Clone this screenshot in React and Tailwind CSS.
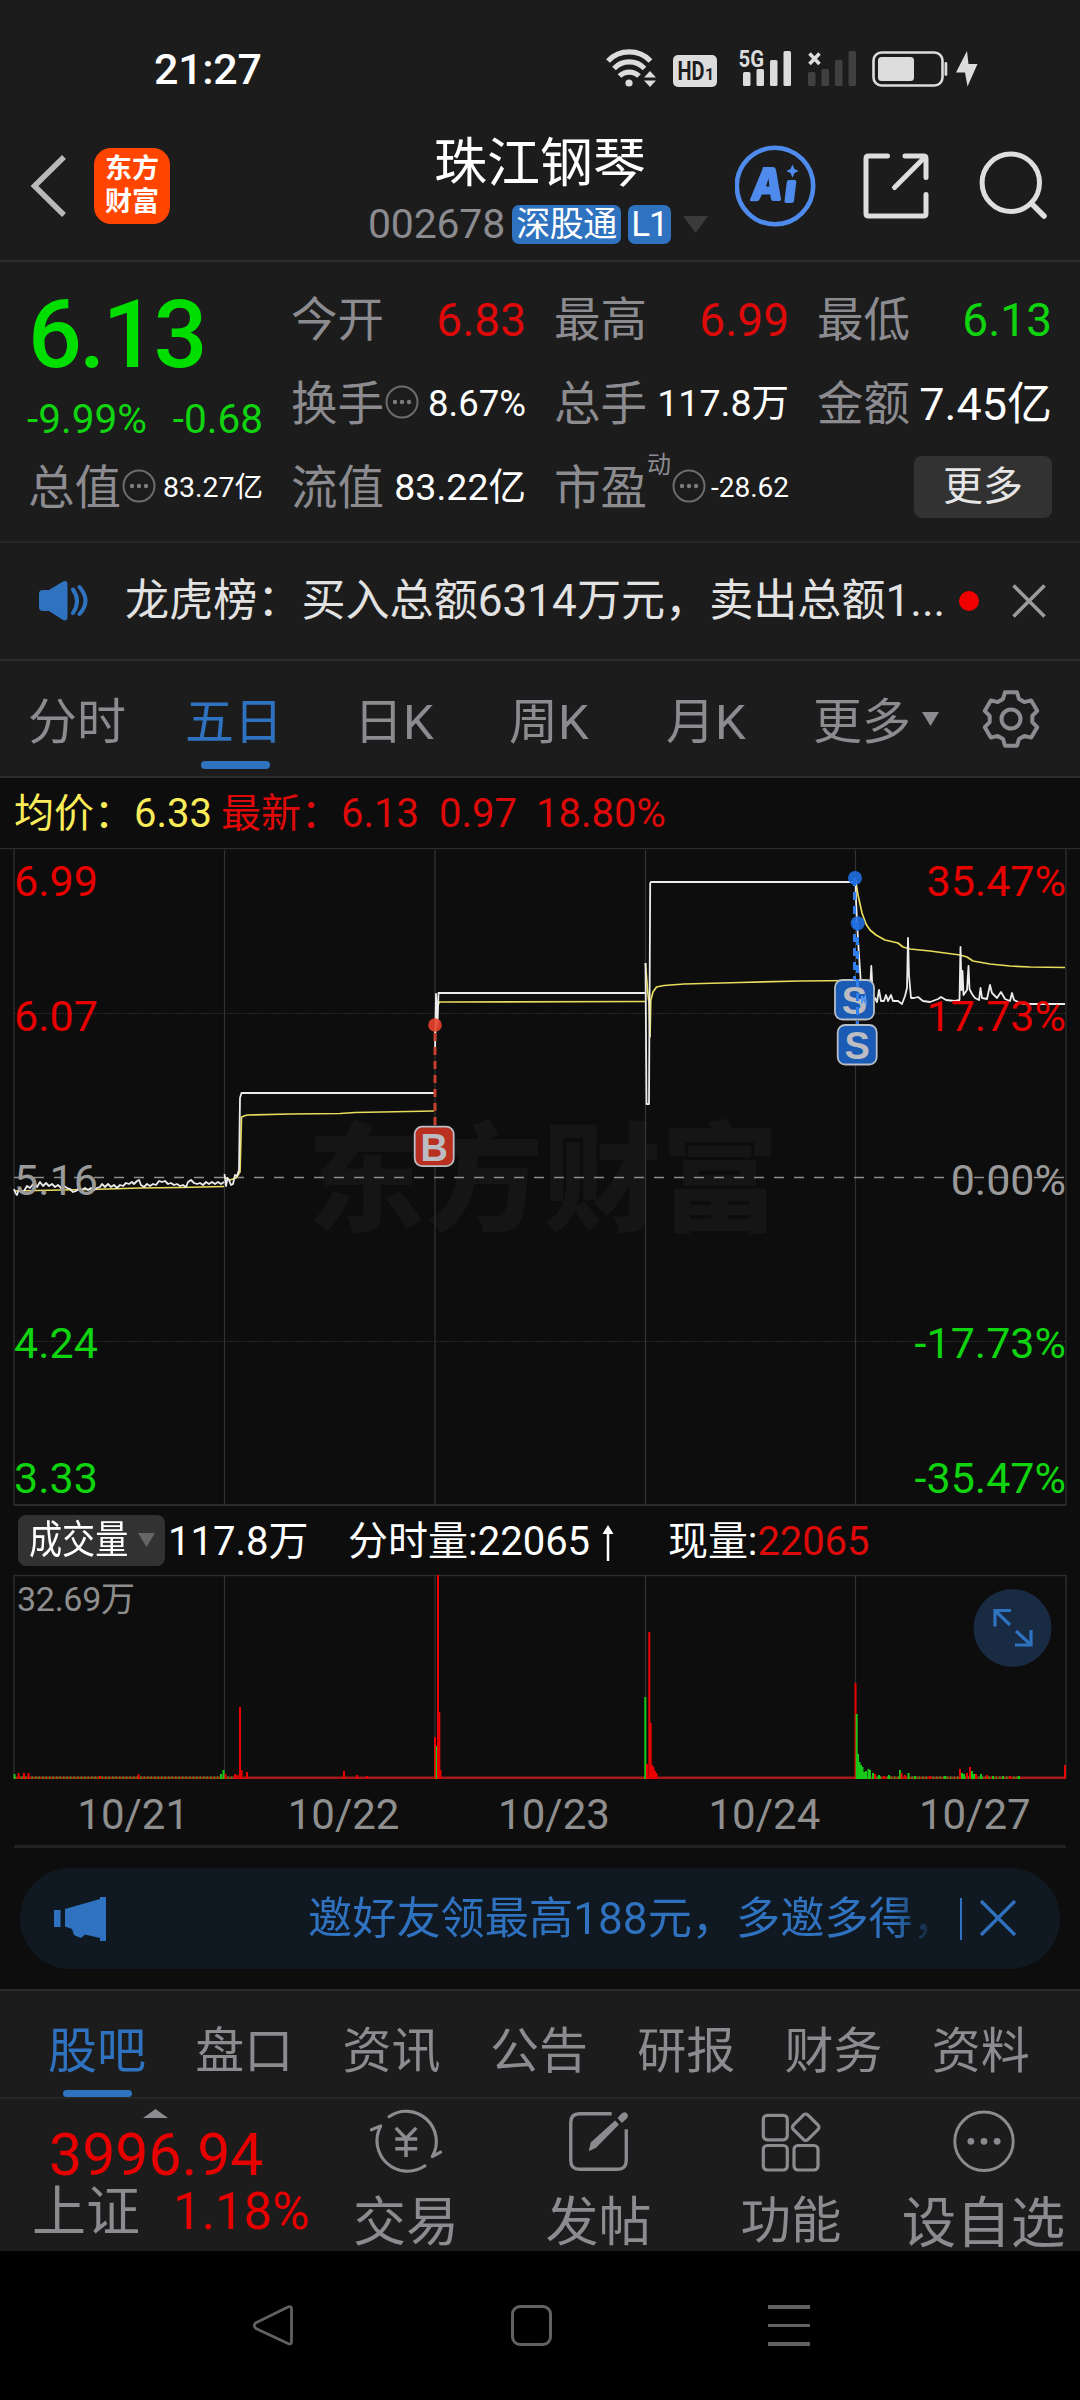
import React from "react";

const UP = "#e60000";
const DOWN = "#0fd40f";

/* ---------- status bar ---------- */

function StatusBar() {
  return (
    <div className="flex h-[130px] items-start justify-between pl-[154px] pr-[96px] pt-[42px]">
      <span className="text-[43px] font-medium leading-[54px] tracking-[-0.3px] text-white">21:27</span>
      <svg width="384" height="50" viewBox="600 42 384 50" className="mt-0 text-[#dcdcdc]">
        <g fill="none" stroke="#dcdcdc" strokeWidth="5.2">
          <path d="M608 61a29.5 29.5 0 0 1 42.5 0" />
          <path d="M614 68.5a21 21 0 0 1 30.5 0" />
          <path d="M619.500 76a14 14 0 0 1 19.500 0" />
        </g>
        <circle cx="629" cy="83" r="3.6" fill="#dcdcdc" />
        <path d="M650 71l6 6.500h-12zM650 87l6-6.500h-12z" fill="#dcdcdc" />
        <rect x="673" y="55" width="44" height="32" rx="5" fill="#dcdcdc" />
        <text x="677.5" y="80" fontSize="25" fontWeight="700" fill="#1c1c1c" fontFamily="Roboto" textLength="27" lengthAdjust="spacingAndGlyphs">HD</text>
        <text x="705" y="80" fontSize="16" fontWeight="700" fill="#1c1c1c" fontFamily="Roboto">1</text>
        <text x="738.500" y="66.500" fontSize="23" fontWeight="700" fill="#dcdcdc" fontFamily="Roboto" textLength="25.500" lengthAdjust="spacingAndGlyphs">5G</text>
        <g fill="#dcdcdc">
          <rect x="743" y="72" width="7.500" height="14" rx="1.500" />
          <rect x="756.500" y="69" width="7.500" height="17" rx="1.500" />
          <rect x="770" y="60" width="7.500" height="26" rx="1.500" />
          <rect x="783.500" y="51" width="7.500" height="35" rx="1.500" />
        </g>
        <g fill="#404040">
          <rect x="808" y="72" width="7.500" height="14" rx="1.500" />
          <rect x="821.500" y="69" width="7.500" height="17" rx="1.500" />
          <rect x="835" y="60" width="7.500" height="26" rx="1.500" />
          <rect x="848.500" y="51" width="7.500" height="35" rx="1.500" />
        </g>
        <path d="M809.500 53.500l10 10.500m0-10.500l-10 10.500" stroke="#dcdcdc" strokeWidth="3.6" />
        <rect x="873.500" y="52.500" width="69" height="33" rx="8" fill="none" stroke="#dcdcdc" strokeWidth="2.600" />
        <rect x="878" y="57" width="36" height="24" rx="3.500" fill="#dcdcdc" />
        <rect x="944.500" y="62" width="2.800" height="14" rx="1.400" fill="#dcdcdc" />
        <path d="M967 51l-11 21.500h9l2.500 14 10-22.500h-9z" fill="#dcdcdc" />
      </svg>
    </div>
  );
}

/* ---------- title bar ---------- */

function Header() {
  return (
    <header className="grid h-[132px] grid-cols-[345px_390px_345px] border-b-2 border-[#2d2d2d]">
      <div className="flex items-start pl-[28px] pt-[18px]">
        <svg width="42" height="76" viewBox="28 148 42 76">
          <path d="M64 157L34.500 186L64 215" fill="none" stroke="#b9b9b9" strokeWidth="5.500" />
        </svg>
        <div className="ml-[24px] flex h-[76px] w-[76px] flex-col items-center justify-center rounded-[17px] bg-[#ff4500] text-[27px] font-bold leading-[33px] text-white">
          <span>东方</span>
          <span>财富</span>
        </div>
      </div>
      <div className="flex flex-col items-center">
        <h1 className="mt-[4px] text-[53px] font-normal leading-[60px] text-white">珠江钢琴</h1>
        <div className="-ml-[4px] mt-[10px] flex h-[40px] items-center">
          <span className="text-[41px] leading-none tracking-[-0.2px] text-[#8b8b90]">002678</span>
          <span className="ml-[7px] flex h-[39px] w-[109px] items-center justify-center rounded-[7px] bg-[#2f72c0] text-[34px] leading-none tracking-[-0.5px] text-white">深股通</span>
          <span className="ml-[7px] flex h-[39px] w-[43px] items-center justify-center rounded-[7px] bg-[#2f72c0] text-[35px] leading-none tracking-[-1px] text-white">L1</span>
          <svg width="25" height="17" viewBox="0 0 25 17" className="ml-[12px]">
            <path d="M0 0h25L12.500 17z" fill="#3b3b3b" />
          </svg>
        </div>
      </div>
      <svg width="345" height="110" viewBox="735 130 345 110" fill="none" strokeLinecap="round" strokeLinejoin="round">
        <circle cx="775" cy="186" r="38.200" stroke="#4f8bec" strokeWidth="4.600" />
        <path fillRule="evenodd" d="M763 167h9.500q3 0 3.500 3l5 29q.4 2-1.600 2h-6q-2 0-2.400-2l-.8-4.500h-8.400l-2.300 5q-.8 1.700-2.500 1.700h-5.600q-2.200 0-1.200-2.200l12.300-30zM766 186.500h3.400l-.9-8z" fill="#4f8bec" />
        <path d="M789 180h5.500q2 0 1.800 2l-2.300 19q-.3 2-2.300 2h-5.500q-2 0-1.700-2l2.300-19q.3-2 2.200-2zM792.500 164.500l2 4.500 4.200 2-4.200 2-2 4.500-2-4.500-4.200-2 4.200-2z" fill="#4f8bec" />
        <g stroke="#dedede" strokeWidth="5">
          <path d="M887.500 156H868.500Q866 156 866 158.500V213.500Q866 216 868.500 216H923.500Q926 216 926 213.500V194.500" />
          <path d="M905 156H923.500Q926 156 926 158.500V177.500" />
          <path d="M925 157L894.500 187.500" />
        </g>
        <circle cx="1010.800" cy="182.700" r="28.700" stroke="#dedede" strokeWidth="5" />
        <path d="M1031.500 203.500L1044 216" stroke="#dedede" strokeWidth="5.500" />
      </svg>
    </header>
  );
}

/* ---------- quote panel ---------- */

function MoreDots({ className = "" }) {
  return (
    <svg width="34" height="34" viewBox="0 0 34 34" className={className}>
      <circle cx="17" cy="17" r="15.500" fill="none" stroke="#6c6c6c" strokeWidth="2" />
      <circle cx="10" cy="17" r="2.200" fill="#7c7c7c" />
      <circle cx="17" cy="17" r="2.200" fill="#7c7c7c" />
      <circle cx="24" cy="17" r="2.200" fill="#7c7c7c" />
    </svg>
  );
}

function Cell({ label, dots, sup, value, size, color = "text-white" }) {
  return (
    <div className="flex h-[84px] w-[235px] items-center">
      <span className="text-[46.500px] leading-[60px] text-[#8b8b90]">{label}</span>
      {sup && <span className="-mt-[46px] w-[24px] text-[24px] leading-none text-[#8b8b90]">{sup}</span>}
      {dots && <MoreDots className="-mt-[5px] ml-[1px] shrink-0" />}
      <span className={"ml-auto whitespace-nowrap leading-none " + size + " " + color}>{value}</span>
    </div>
  );
}

function Quote() {
  return (
    <section className="flex h-[281px] border-b-2 border-[#262626] pl-[28px] pt-[16px]">
      <div className="flex w-[235px] flex-col">
        <div className="mt-[9px] text-[95px] font-medium leading-[96px] tracking-[-3px] text-[#00de00]">6.13</div>
        <div className="mt-[12px] flex h-[48px] justify-between text-[40.500px] leading-[48px] text-[#0fd40f]">
          <span className="-ml-px">-9.99%</span>
          <span>-0.68</span>
        </div>
        <div className="mt-[3px]">
          <Cell label="总值" dots value="83.27亿" size="text-[28.500px]" />
        </div>
      </div>
      <div className="ml-[28px] grid grid-cols-[263px_263px_235px] content-start">
        <Cell label="今开" value="6.83" size="text-[46px]" color="text-[#de0a0a]" />
        <Cell label="最高" value="6.99" size="text-[46px]" color="text-[#de0a0a]" />
        <Cell label="最低" value="6.13" size="text-[46px]" color="text-[#0fd40f]" />
        <Cell label="换手" dots value="8.67%" size="text-[36.500px]" />
        <Cell label="总手" value="117.8万" size="text-[37.500px]" />
        <Cell label="金额" value="7.45亿" size="text-[45px]" />
        <Cell label="流值" value="83.22亿" size="text-[37.500px]" />
        <Cell label="市盈" sup="动" dots value="-28.62" size="text-[28px]" />
        <div className="flex h-[84px] items-center justify-end">
          <span className="-mt-[2px] flex h-[62px] w-[138px] items-center justify-center rounded-[8px] bg-[#323232] text-[40px] leading-none text-[#e6e6e6]">更多</span>
        </div>
      </div>
    </section>
  );
}

/* ---------- news ticker ---------- */

function Notice() {
  return (
    <section className="flex h-[118px] items-center border-b-2 border-[#2d2d2d] pl-[38px]">
      <svg width="50" height="42" viewBox="38 580 50 42">
        <path d="M39 594q0-4 4-4h6L63 581.500Q67.500 580 67.500 584V617Q67.500 621.500 63 620L49 611H43q-4 0-4-4z" fill="#2f72c0" />
        <path d="M73 589.500q8 11.500 0 23.500M79.500 587q12 14 0 27" fill="none" stroke="#2f72c0" strokeWidth="4" strokeLinecap="round" />
      </svg>
      <p className="ml-[37px] w-[830px] whitespace-nowrap text-[44.100px] leading-none text-[#e2e2e2]">龙虎榜：买入总额6314万元，卖出总额1...</p>
      <span className="ml-[4px] h-[20px] w-[20px] rounded-full bg-[#f00000]" />
      <svg width="34" height="34" viewBox="0 0 34 34" className="ml-[33px]">
        <path d="M1.500 1.500l31 31m0-31l-31 31" stroke="#9b9b9b" strokeWidth="3.600" />
      </svg>
    </section>
  );
}

/* ---------- period tabs ---------- */

function gearPath() {
  const pts = [];
  for (let i = 0; i < 6; i++) {
    const a = (i * Math.PI) / 3 - Math.PI / 2;
    [[-0.38, 21.5], [-0.22, 27.5], [0.22, 27.5], [0.38, 21.5]].forEach(([o, r]) => {
      pts.push((r * Math.cos(a + o)).toFixed(1) + " " + (r * Math.sin(a + o)).toFixed(1));
    });
  }
  return "M" + pts.join("L") + "Z";
}

function PeriodTabs() {
  return (
    <nav className="flex h-[117px] items-start border-b-2 border-[#2d2d2d] pl-[28px] pt-[32px] text-[49px] leading-[60px] text-[#8b8b90]">
      <span className="w-[157px]">分时</span>
      <span className="flex w-[169px] flex-col text-[#2f72c0]">
        五日
        <i className="ml-[16px] mt-[8px] h-[8px] w-[69px] rounded-full bg-[#2f72c0]" />
      </span>
      <span className="w-[155px]">日K</span>
      <span className="w-[157px]">周K</span>
      <span className="w-[147px]">月K</span>
      <span className="w-[109px]">更多</span>
      <svg width="17" height="14" viewBox="0 0 17 14" className="mt-[19px]">
        <path d="M0 0h17L8.500 14z" fill="#8b8b90" />
      </svg>
      <svg width="62" height="62" viewBox="-31 -31 62 62" className="-mt-[5px] ml-[41px]" fill="none" stroke="#8b8b90">
        <path d={gearPath()} strokeWidth="4" strokeLinejoin="round" />
        <circle r="9.500" strokeWidth="4" />
      </svg>
    </nav>
  );
}

/* ---------- price chart ---------- */

const DAY_X = [224.5, 435, 645.5, 855.5];

const PRICE = [
  "14,1189 15.500,1193 17,1195 19,1189 21,1192 24,1191 27,1186 30,1188 34,1183 37,1187 40,1182 43,1186 46,1183 49,1186 52,1184 55,1187 58,1185 61,1188 64,1186 67,1188 70,1189 73,1192 76,1191 79,1188 82,1190 85,1188 88,1190 91,1188 94,1190 97,1188 100,1187 102,1184 105,1187 108,1184 111,1187 114,1185 117,1188 120,1185 123,1186 126,1183 129,1184 132,1182 134,1184 137,1181 139,1180 141,1185 144,1187 147,1184 150,1186 153,1184 156,1185 159,1181 162,1182 165,1181 168,1184 171,1183 174,1185 177,1184 180,1186 183,1185 186,1187 188,1182 191,1180 194,1183 197,1184 200,1183 203,1185 206,1182 209,1184 212,1182 215,1184 218,1182 221,1184 224,1182",
  "224.500,1174 226,1186 227.500,1178 229,1180 231,1185 233,1184 235,1175 237,1176 239,1170 240,1098 241.500,1093 434,1093",
  "435,1053 436,994 437.500,1025 438.500,993 645,993",
  "645.500,963 646.500,1104 649,1104 650.200,883 651,882 855,882",
  "855.500,880 856,900 858,940 861,985 864,995 866,1001 868,993 869.500,1000 871.300,966 873,1000 875,998 877,1002 879,990 881,1001 884,1001 886,995 888,1001 891,995 893,1001 898,1001 902,1004 905,996 907,988 908,938 909,975 911,998 914,998 918,997 923,1001 930,1002 938,999 941,997 946,1000 955,1001 959.500,1000 960.500,947 961.500,990 962.500,971 963.500,995 967,990 968.500,966 969.500,989 972,994 975,998 979,1000 980.500,988 982,998 987,999 990,985 992,993 997,998 1001,992 1005,999 1010,1001 1012,993 1014,1000 1020,1003 1024,1004 1065,1004",
];

const AVERAGE = [
  "14,1191 60,1190 90,1189.500 140,1188 180,1187.500 224,1186.500",
  "224.500,1177 230,1180 236,1178 240,1172 241.500,1117 247,1115 290,1114 340,1113.500 355,1112.500 434,1111",
  "435,1035 437,1010 439,1002 645,1001.500",
  "645.500,963 647.500,990 649,1003 650,1037 650.800,1000 653,992 656.500,987 664,985.500 684,984 740,982.500 800,981 855,980.500",
  "855.500,880 858,895 862,913 866,924 870,930 876,935 885,940 898,943 903,947 910,949 930,951 960,955 967,957 973,961 990,964 1010,966 1030,967 1065,967.500",
];

const SCALE_ROWS = [
  [895.5, "6.99", "35.47%", UP],
  [1030.5, "6.07", "17.73%", UP],
  [1194.5, "5.16", "0.00%", "#9a9a9a"],
  [1357.5, "4.24", "-17.73%", DOWN],
  [1493, "3.33", "-35.47%", DOWN],
];

function Badge({ x, y, letter, fill }) {
  return (
    <g>
      <rect x={x} y={y} width="39" height="39.500" rx="7.500" fill={fill} stroke="#b9bdc6" strokeWidth="1.800" />
      <text x={x + 19.5} y={y + 34} textAnchor="middle" fontSize="38" fontWeight="700" fontFamily="Liberation Sans" fill="#bcbdc2">{letter}</text>
    </g>
  );
}

function PriceChart() {
  return (
    <svg width="1080" height="660" viewBox="0 848 1080 660" className="block">
      <text x="543" y="1222" textAnchor="middle" fontSize="118" fontWeight="900" fill="#151515" fontFamily="Noto Sans CJK SC">东方财富</text>
      <path d="M0 848.500H1080" stroke="#2e2e2e" strokeWidth="1.500" />
      <path d="M14 848V1505M1066 848V1505" stroke="#2a2a2a" strokeWidth="1.500" />
      {DAY_X.map((x) => (
        <path key={x} d={"M" + x + " 850V1505"} stroke="#323232" strokeWidth="1.200" />
      ))}
      <path d="M14 1505H1066" stroke="#2b2b2b" strokeWidth="2.200" />
      <path d="M14 1013.500H1066M14 1341.500H1066" stroke="#333" strokeWidth="1" strokeDasharray="1.500 1.500" />
      <path d="M14 1177.500H1066" stroke="#8d8d8d" strokeWidth="1.500" strokeDasharray="10 10" />
      <g fill="none" stroke="#e8dc5c" strokeWidth="1.700" strokeLinejoin="round">
        {AVERAGE.map((p, i) => <polyline key={i} points={p} />)}
      </g>
      <g fill="none" stroke="#ececec" strokeWidth="1.800" strokeLinejoin="round">
        {PRICE.map((p, i) => <polyline key={i} points={p} />)}
      </g>
      <path d="M435 1031V1126" stroke="#c8412f" strokeWidth="3" strokeDasharray="8 6" strokeDashoffset="-2" />
      <circle cx="435" cy="1025" r="6.800" fill="#e8432c" fillOpacity=".9" />
      <Badge x={414.7} y={1126.6} letter="B" fill="#b93021" />
      <Badge x={835} y={980} letter="S" fill="#1a5bb5" />
      <path d="M862 996v6l3-5 1 8" fill="none" stroke="#5a9cf5" strokeWidth="2" />
      <g stroke="#2f7fee" strokeWidth="3" strokeDasharray="8 6">
        <path d="M854.500 878V980" />
        <path d="M857.500 923V1024" />
      </g>
      <g fill="#1f6fe0" fillOpacity=".9">
        <circle cx="855" cy="878" r="7" />
        <circle cx="857.700" cy="923.300" r="7" />
      </g>
      <Badge x={837.7} y={1025} letter="S" fill="#1a5bb5" />
      {SCALE_ROWS.map(([y, price, pct, color]) => (
        <g key={price} fill={color} fontSize="43" fontFamily="Roboto">
          <text x="14" y={y}>{price}</text>
          <text x="1066" y={y} textAnchor="end">{pct}</text>
        </g>
      ))}
    </svg>
  );
}

/* ---------- volume chart ---------- */

const G = "#18c818";
const R = "#ea0000";
const VOLUME = [
  [14.5, 1774, G], [18.5, 1773, R], [24, 1773, R], [28.5, 1773, R], [100, 1776, R], [138.5, 1774, R],
  [221, 1774, G], [223.5, 1770, G], [225.5, 1774, R], [235, 1774, R], [237.5, 1775, R],
  [240, 1707, R], [241.5, 1770, R], [247, 1772, R], [344, 1771, R], [357, 1775, R], [367, 1776, R],
  [435, 1737, R], [436.7, 1746, G], [438, 1575, R], [439.3, 1712, R], [440.5, 1770, R],
  [645.3, 1697, G], [647, 1764, R], [649.3, 1632, R], [650.7, 1723, R], [652, 1765, R], [653.5, 1767, R], [655, 1771, R], [656.5, 1773, R],
  [855.5, 1683, R], [856.7, 1714, G], [858, 1754, G], [859.5, 1762, G], [861, 1765, G], [862.5, 1767, G], [864, 1772, G],
  [866, 1771, G], [868.5, 1769, G], [870, 1770, G], [873, 1773, G], [875, 1774, R], [879, 1775, G], [884, 1776, R], [889, 1775, G],
  [900, 1770, G], [901.5, 1773, R], [905, 1775, R], [908.5, 1773, G], [915, 1776, G], [930, 1776, R], [945, 1776, G],
  [960, 1769, R], [962, 1773, G], [964, 1774, G], [967, 1773, R], [970, 1767, R], [972, 1771, G], [974, 1774, G], [976, 1774, R],
  [981, 1774, G], [987, 1775, R], [993, 1776, G], [1003, 1776, G], [1010, 1776, R], [1019, 1776, G], [1065, 1765, R],
];

function VolumeChart() {
  return (
    <svg width="1080" height="210" viewBox="0 1574 1080 210" className="block">
      <path d="M14 1778V1575.500H1066V1778" fill="none" stroke="#2a2a2a" strokeWidth="1.500" />
      {DAY_X.map((x) => (
        <path key={x} d={"M" + x + " 1575V1778"} stroke="#323232" strokeWidth="1.200" />
      ))}
      <path d="M14 1777.700H1066" stroke="#a61a1a" strokeWidth="2.600" />
      <path d="M14 1777.700H236M866 1777.700H1020" stroke="#3f9a20" strokeWidth="2.200" strokeDasharray="1.500 2" />
      {VOLUME.map(([x, y, c], i) => (
        <path key={i} d={"M" + x + " " + y + "V1779"} stroke={c} strokeWidth="2" />
      ))}
      <text x="17" y="1611" fontSize="34" fill="#8e8e8e" fontFamily="Roboto, 'Noto Sans CJK SC'" textLength="118">32.69万</text>
      <circle cx="1012.500" cy="1628" r="39" fill="#182b42" />
      <g fill="none" stroke="#2f72c0" strokeWidth="3.200">
        <path d="M995 1626.500V1610.500H1011M995.500 1611L1010 1625" />
        <path d="M1031 1630V1645H1015M1030.500 1644.500L1016 1631" />
      </g>
    </svg>
  );
}

function ChartPanel() {
  return (
    <section className="bg-[#0d0d0d]">
      <div className="flex h-[70px] items-center whitespace-nowrap pl-[14px] pt-[2px] text-[40px] leading-none text-[#de0a0a]">
        <span className="w-[120px] text-[#fbec5a]">均价：</span>
        <span className="w-[87px] text-[#fbec5a]">6.33</span>
        <span className="w-[120px]">最新：</span>
        <span className="w-[98px]">6.13</span>
        <span className="w-[97px]">0.97</span>
        <span>18.80%</span>
      </div>
      <PriceChart />
      <div className="flex h-[66px] items-center whitespace-nowrap pl-[18px] pt-[2px] text-[40px] leading-none text-white">
        <span className="-mt-[4px] flex h-[51px] w-[147px] items-center rounded-[8px] bg-[#323232] pl-[11px]">
          <span className="w-[104px] origin-left scale-x-[.86] text-[38.500px]">成交量</span>
          <svg width="17" height="14" viewBox="0 0 17 14" className="ml-[5px]">
            <path d="M0 0h17L8.500 14z" fill="#666" />
          </svg>
        </span>
        <span className="ml-[3px] w-[180px]">117.8万</span>
        <span className="w-[255px]">
          分时量:22065
          <svg width="12" height="36" viewBox="0 0 12 36" className="ml-[12px] inline-block align-[-6px]">
            <path d="M6 4V36" stroke="#fff" strokeWidth="2.500" />
            <path d="M6 0l5.500 9H.5z" fill="#fff" />
          </svg>
        </span>
        <span className="ml-[65px] tracking-[-0.1px]">
          现量:<span className="text-[#de0a0a]">22065</span>
        </span>
      </div>
      <VolumeChart />
      <div className="mx-[14px] grid h-[64px] grid-cols-5 items-center border-b-[3px] border-[#222] text-center text-[42px] leading-none text-[#8f8f8f]">
        {["10/21", "10/22", "10/23", "10/24", "10/27"].map((d) => (
          <span key={d} className="pl-[28px]">{d}</span>
        ))}
      </div>
      <div className="h-[141px] pt-[20px]">
        <div className="mx-[20px] flex h-[101px] items-center rounded-full bg-[#101922] pl-[33px]">
          <svg width="54" height="46" viewBox="52 1896 54 46" fill="#2f72c0">
            <rect x="53" y="1910" width="6.500" height="17" />
            <path d="M64 1909L99 1899V1897H105V1941H99V1938L84 1934.500 80 1938 73 1935 71 1929 64 1926.500z" />
          </svg>
          <p className="-mr-[24px] ml-[201px] w-[642px] whitespace-nowrap bg-linear-to-r from-[#2f72c0] from-[91%] to-[#2f72c000] to-[98%] bg-clip-text text-[44.200px] leading-[56px] text-transparent">邀好友领最高188元，多邀多得，</p>
          <i className="ml-[34px] h-[42px] w-[1.500px] bg-[#2f72c0]" />
          <svg width="38" height="38" viewBox="0 0 38 38" className="-mt-[2px] ml-[17px]">
            <path d="M2 2l34 34m0-34L2 36" stroke="#2f72c0" strokeWidth="3.200" />
          </svg>
        </div>
      </div>
    </section>
  );
}

/* ---------- lower tabs and toolbar ---------- */

function InfoTabs() {
  return (
    <nav className="flex h-[110px] items-start border-b-2 border-t-2 border-b-[#262626] border-t-[#2d2d2d] pl-[48px] pt-[31px] text-[49px] leading-[60px] text-[#8b8b90]">
      {["股吧", "盘口", "资讯", "公告", "研报", "财务", "资料"].map((t, i) => (
        <span key={t} className={i === 0 ? "flex w-[147.300px] shrink-0 flex-col text-[#2f72c0]" : "w-[147.300px] shrink-0"}>
          {t}
          {i === 0 && <i className="ml-[15px] mt-[8px] h-[7px] w-[69px] rounded-full bg-[#2f72c0]" />}
        </span>
      ))}
    </nav>
  );
}

function Toolbar() {
  const g = "#8b8b90";
  return (
    <footer className="flex h-[152px] text-[#8b8b90]">
      <div className="w-[310px]">
        <svg width="25" height="9" viewBox="0 0 25 9" className="ml-[143px] mt-[10px] block">
          <path d="M12.500 0L25 9H0z" fill={g} />
        </svg>
        <div className="mt-[8px] pl-[49px] text-[59px] leading-[58px] text-[#e60000]">3996.94</div>
        <div className="-mt-[1px] flex whitespace-nowrap pl-[32px] leading-[58px]">
          <span className="w-[141px] pt-px text-[54px]">上证</span>
          <span className="text-[51px] text-[#e60000]">1.18%</span>
        </div>
      </div>
      <div className="flex w-[192px] flex-col items-center">
        <svg width="80" height="76" viewBox="366 2104 80 76" fill="none" stroke={g} strokeWidth="3.200" strokeLinecap="round" strokeLinejoin="round" className="mt-[5px]">
          <path d="M388.500 2117A31 31 0 0 1 433 2158L441.500 2153.500" />
          <path d="M425.500 2167.500A31.500 31.500 0 0 1 380 2126.500L370.500 2130.500" />
          <path d="M395.500 2128.500L406 2139.500L416.500 2128.500M395 2140H417.500M395 2150H417.500M406 2140V2158.500" strokeLinecap="butt" strokeWidth="3.600" />
        </svg>
        <span className="mt-[17px] text-[53px] leading-[56px]">交易</span>
      </div>
      <div className="flex w-[193px] flex-col items-center">
        <svg width="64" height="76" viewBox="567 2104 64 76" fill="none" stroke={g} strokeWidth="3.400" className="mt-[5px]">
          <path d="M612 2114H579Q570 2114 570 2123V2162Q570 2171 579 2171H618Q627 2171 627 2162V2130" />
          <path d="M588.500 2152.500L590.500 2143.500L615.500 2121L619.500 2125L596 2149z" fill={g} stroke="none" />
          <path d="M618 2118.500l4-4.500q3-3 5.500-.5t0 5.500l-5 4.500z" fill={g} stroke="none" />
        </svg>
        <span className="mt-[17px] text-[53px] leading-[56px]">发帖</span>
      </div>
      <div className="flex w-[192px] flex-col items-center">
        <svg width="64" height="76" viewBox="759 2104 64 76" fill="none" stroke={g} strokeWidth="3.200" className="mt-[5px]">
          <rect x="763.300" y="2115.300" width="24" height="24.500" rx="4" />
          <rect x="763.300" y="2145.500" width="24" height="24.500" rx="4" />
          <rect x="794" y="2145.500" width="24" height="24.500" rx="4" />
          <rect x="795.500" y="2117" width="20.500" height="20.500" rx="3" transform="rotate(45 805.700 2127.200)" />
        </svg>
        <span className="mt-[13px] text-[50.500px] leading-[56px]">功能</span>
      </div>
      <div className="flex w-[193px] flex-col items-center">
        <svg width="64" height="76" viewBox="951.500 2104 64 76" className="mt-[5px]">
          <circle cx="983.500" cy="2142.300" r="30" fill="none" stroke={g} strokeWidth="3" />
          <circle cx="970" cy="2142.300" r="3.500" fill={g} />
          <circle cx="983.500" cy="2142.300" r="3.500" fill={g} />
          <circle cx="997" cy="2142.300" r="3.500" fill={g} />
        </svg>
        <span className="mt-[17px] whitespace-nowrap text-[54.500px] leading-[56px]">设自选</span>
      </div>
    </footer>
  );
}

function SystemNav() {
  return (
    <div className="flex h-[149px] items-center bg-black pl-[252px]">
      <svg width="42" height="44" viewBox="252 2304 42 44" fill="none" stroke="#616161" strokeWidth="2.800">
        <path d="M255.500 2323L288 2307Q291.500 2305.500 291.500 2309V2341.500Q291.500 2345 288 2343.500L256 2328.500Q252.800 2325.500 255.500 2323z" />
      </svg>
      <span className="ml-[217px] h-[41px] w-[41px] rounded-[9px] border-[3px] border-[#616161]" />
      <span className="ml-[216px] flex h-[41px] w-[42px] flex-col justify-between">
        <i className="h-[4px] bg-[#616161]" />
        <i className="h-[3px] bg-[#616161]" />
        <i className="h-[4px] bg-[#616161]" />
      </span>
    </div>
  );
}

export default function App() {
  return (
    <div className="h-[2400px] w-[1080px] overflow-hidden bg-[#1c1c1c] font-[Roboto,'Noto_Sans_CJK_SC',sans-serif]">
      <StatusBar />
      <Header />
      <Quote />
      <Notice />
      <PeriodTabs />
      <ChartPanel />
      <InfoTabs />
      <Toolbar />
      <SystemNav />
    </div>
  );
}
